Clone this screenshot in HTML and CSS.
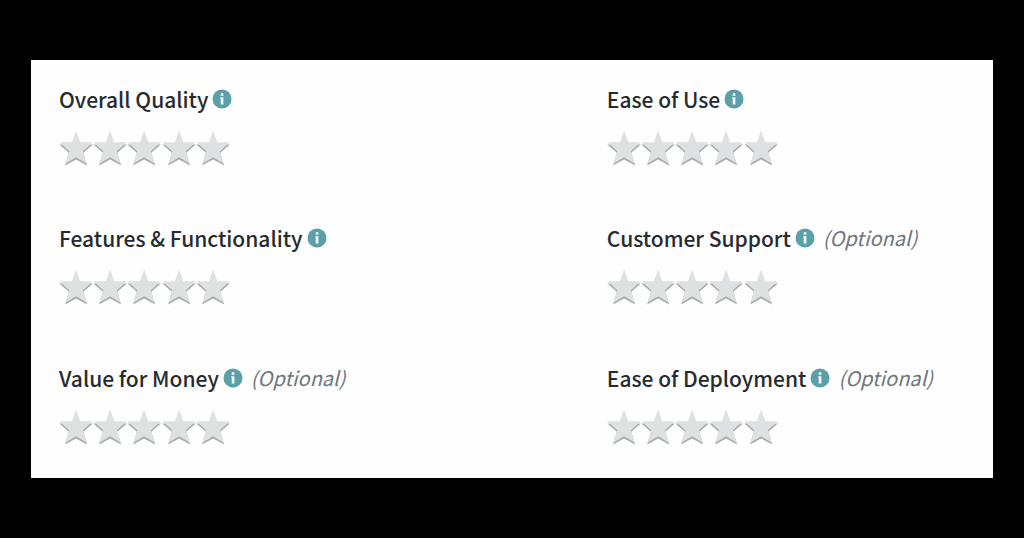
FILE: index.html
```html
<!DOCTYPE html>
<html lang="en">
<head>
<meta charset="utf-8">
<meta name="viewport" content="width=device-width, initial-scale=1">
<title>Ratings</title>
<link rel="stylesheet" href="styles.css">
</head>
<body>
<svg class="symbols" aria-hidden="true">
  <symbol id="star" viewBox="0 0 34 36">
    <path class="star-shadow" d="M17 3 21 14.5H33.8L24.2 22.8 28 35.4 17 29.4 6 35.4 9.8 22.8.2 14.5H13Z"/>
    <path class="star-face" d="M17 .6 21.2 12.3H33.7L23.8 21.3 27.4 33.4 17 27.3 6.6 33.4 10.2 21.3.3 12.3H12.8Z"/>
  </symbol>
  <symbol id="info" viewBox="0 0 20 20">
    <circle class="info-disc" cx="10" cy="10" r="9.5"/>
    <path class="info-mark" d="M8.7 4.2h2.7v2.5H8.7ZM8.2 8.2h3.2v7.2H8.7V9.4h-.5Z"/>
  </symbol>
</svg>
<form class="panel">
  <fieldset class="rating" aria-labelledby="quality-name">
    <div class="heading"><span class="name" id="quality-name">Overall Quality</span><button class="info" type="button" aria-label="About Overall Quality"><svg><use href="#info"/></svg></button></div>
    <div class="stars">
      <label class="star"><input type="radio" name="quality" value="1" aria-label="1 star"><svg><use href="#star"/></svg></label>
      <label class="star"><input type="radio" name="quality" value="2" aria-label="2 stars"><svg><use href="#star"/></svg></label>
      <label class="star"><input type="radio" name="quality" value="3" aria-label="3 stars"><svg><use href="#star"/></svg></label>
      <label class="star"><input type="radio" name="quality" value="4" aria-label="4 stars"><svg><use href="#star"/></svg></label>
      <label class="star"><input type="radio" name="quality" value="5" aria-label="5 stars"><svg><use href="#star"/></svg></label>
    </div>
  </fieldset>
  <fieldset class="rating" aria-labelledby="ease-name">
    <div class="heading"><span class="name" id="ease-name">Ease of Use</span><button class="info" type="button" aria-label="About Ease of Use"><svg><use href="#info"/></svg></button></div>
    <div class="stars">
      <label class="star"><input type="radio" name="ease" value="1" aria-label="1 star"><svg><use href="#star"/></svg></label>
      <label class="star"><input type="radio" name="ease" value="2" aria-label="2 stars"><svg><use href="#star"/></svg></label>
      <label class="star"><input type="radio" name="ease" value="3" aria-label="3 stars"><svg><use href="#star"/></svg></label>
      <label class="star"><input type="radio" name="ease" value="4" aria-label="4 stars"><svg><use href="#star"/></svg></label>
      <label class="star"><input type="radio" name="ease" value="5" aria-label="5 stars"><svg><use href="#star"/></svg></label>
    </div>
  </fieldset>
  <fieldset class="rating" aria-labelledby="features-name">
    <div class="heading"><span class="name" id="features-name">Features &amp; Functionality</span><button class="info" type="button" aria-label="About Features &amp; Functionality"><svg><use href="#info"/></svg></button></div>
    <div class="stars">
      <label class="star"><input type="radio" name="features" value="1" aria-label="1 star"><svg><use href="#star"/></svg></label>
      <label class="star"><input type="radio" name="features" value="2" aria-label="2 stars"><svg><use href="#star"/></svg></label>
      <label class="star"><input type="radio" name="features" value="3" aria-label="3 stars"><svg><use href="#star"/></svg></label>
      <label class="star"><input type="radio" name="features" value="4" aria-label="4 stars"><svg><use href="#star"/></svg></label>
      <label class="star"><input type="radio" name="features" value="5" aria-label="5 stars"><svg><use href="#star"/></svg></label>
    </div>
  </fieldset>
  <fieldset class="rating" aria-labelledby="support-name">
    <div class="heading"><span class="name" id="support-name">Customer Support</span><button class="info" type="button" aria-label="About Customer Support"><svg><use href="#info"/></svg></button><em class="optional">(Optional)</em></div>
    <div class="stars">
      <label class="star"><input type="radio" name="support" value="1" aria-label="1 star"><svg><use href="#star"/></svg></label>
      <label class="star"><input type="radio" name="support" value="2" aria-label="2 stars"><svg><use href="#star"/></svg></label>
      <label class="star"><input type="radio" name="support" value="3" aria-label="3 stars"><svg><use href="#star"/></svg></label>
      <label class="star"><input type="radio" name="support" value="4" aria-label="4 stars"><svg><use href="#star"/></svg></label>
      <label class="star"><input type="radio" name="support" value="5" aria-label="5 stars"><svg><use href="#star"/></svg></label>
    </div>
  </fieldset>
  <fieldset class="rating" aria-labelledby="value-name">
    <div class="heading"><span class="name" id="value-name">Value for Money</span><button class="info" type="button" aria-label="About Value for Money"><svg><use href="#info"/></svg></button><em class="optional">(Optional)</em></div>
    <div class="stars">
      <label class="star"><input type="radio" name="value" value="1" aria-label="1 star"><svg><use href="#star"/></svg></label>
      <label class="star"><input type="radio" name="value" value="2" aria-label="2 stars"><svg><use href="#star"/></svg></label>
      <label class="star"><input type="radio" name="value" value="3" aria-label="3 stars"><svg><use href="#star"/></svg></label>
      <label class="star"><input type="radio" name="value" value="4" aria-label="4 stars"><svg><use href="#star"/></svg></label>
      <label class="star"><input type="radio" name="value" value="5" aria-label="5 stars"><svg><use href="#star"/></svg></label>
    </div>
  </fieldset>
  <fieldset class="rating" aria-labelledby="deployment-name">
    <div class="heading"><span class="name" id="deployment-name">Ease of Deployment</span><button class="info" type="button" aria-label="About Ease of Deployment"><svg><use href="#info"/></svg></button><em class="optional">(Optional)</em></div>
    <div class="stars">
      <label class="star"><input type="radio" name="deployment" value="1" aria-label="1 star"><svg><use href="#star"/></svg></label>
      <label class="star"><input type="radio" name="deployment" value="2" aria-label="2 stars"><svg><use href="#star"/></svg></label>
      <label class="star"><input type="radio" name="deployment" value="3" aria-label="3 stars"><svg><use href="#star"/></svg></label>
      <label class="star"><input type="radio" name="deployment" value="4" aria-label="4 stars"><svg><use href="#star"/></svg></label>
      <label class="star"><input type="radio" name="deployment" value="5" aria-label="5 stars"><svg><use href="#star"/></svg></label>
    </div>
  </fieldset>
</form>
</body>
</html>
```
FILE: styles.css
```css
* { box-sizing: border-box; }

body {
  display: flex;
  min-height: 100vh;
  margin: 0;
  padding: 60px 31px;
  background: #000;
  color: #272b2e;
  font-family: "Noto Sans CJK SC", "Open Sans", sans-serif;
  font-size: 20px;
  line-height: 32px;
}

.symbols { position: absolute; width: 0; height: 0; }

.panel {
  flex: 1;
  display: grid;
  grid-template-columns: 3fr 2fr;
  grid-auto-rows: 1fr;
  padding: 0 21px 0 28px;
  background: #fefefe;
}

.rating {
  min-width: 0;
  margin: 0;
  padding: 23px 0 0;
  border: 0;
}

.heading {
  display: flex;
  align-items: center;
  white-space: nowrap;
}

.name { font-size: 21px; font-weight: 500; }

.info {
  width: 20px;
  height: 20px;
  margin: 0 8px 0 4px;
  padding: 0;
  border: 0;
  background: none;
  cursor: pointer;
}

.info svg { display: block; width: 20px; height: 20px; }
.info-disc { fill: #5b9fa8; }
.info-mark { fill: #f2fbfb; }

.optional { color: #6d777d; font-weight: 400; }

.stars {
  display: grid;
  grid-template-columns: repeat(5, 1fr);
  width: 171px;
  margin-top: 15px;
}

.star { position: relative; cursor: pointer; }

.star input {
  position: absolute;
  inset: 0;
  width: 100%;
  height: 100%;
  margin: 0;
  opacity: 0;
  cursor: pointer;
}

.star svg { display: block; width: 100%; height: 36px; }
.star-shadow { fill: #a9acac; }
.star-face { fill: #dee1e2; }
```
